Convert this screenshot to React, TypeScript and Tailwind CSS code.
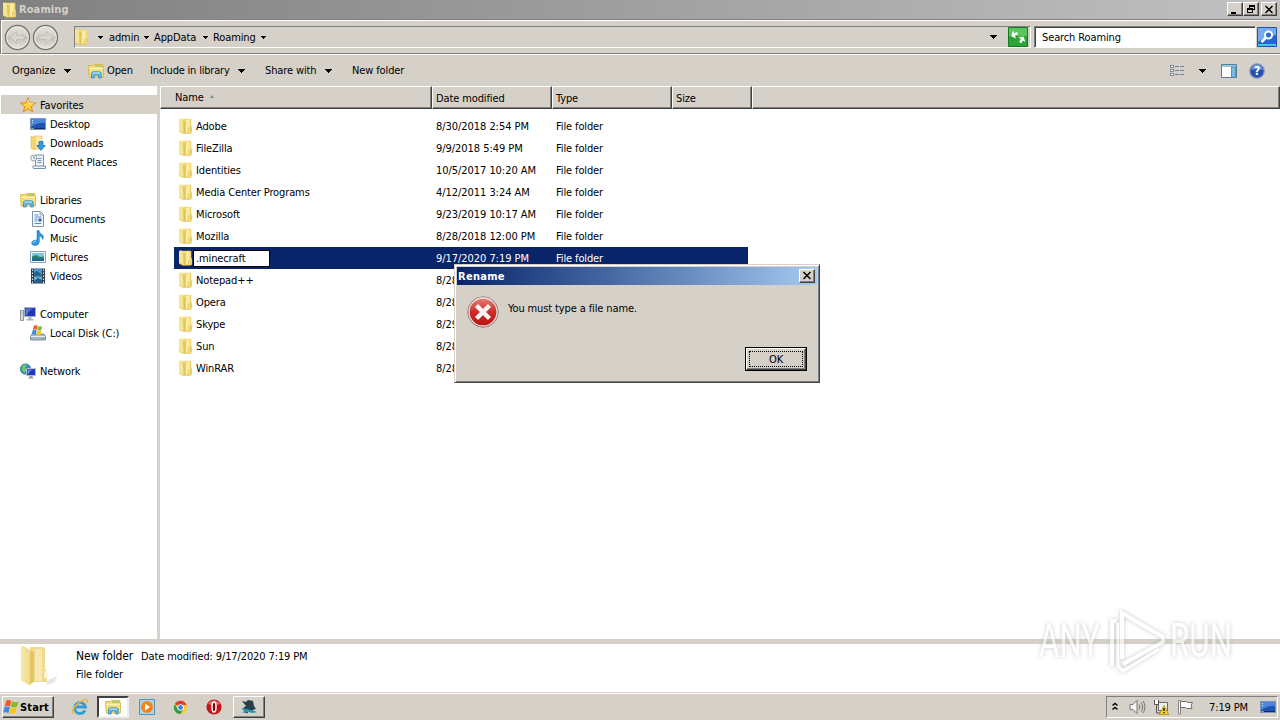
import React from 'react'
import clsx from 'clsx'

const raised =
  'bg-[#d5d0c8] border border-t-white border-l-white border-r-[#404040] border-b-[#404040] shadow-[inset_-1px_-1px_0_#808080]'

interface IconProps {
  className?: string
}

interface LabelProps {
  className?: string
  children: React.ReactNode
}

const Label: React.FC<LabelProps> = ({ className, children }) => (
  <span className={clsx('pt-[2px]', className)}>{children}</span>
)

const FolderIcon: React.FC<IconProps> = ({ className = 'w-4 h-4' }) => (
  <svg viewBox="0 0 16 16" className={clsx('shrink-0', className)}>
    <path d="M5 .8h7.500q.8 0 .8.800v6.400l.8.800v5.400q0 .8-.8.800H5z" fill="#efd769" />
    <path d="M8.300 1.500h3.200v12.800H8z" fill="#faedb0" />
    <path d="M1 1 3 .3l4.500 2v12.500L5.800 15.700 1 13.600z" fill="#f6e48f" />
    <path d="M4.800 2.500 7.500 3v11.600l-1.800 1z" fill="#e3c555" />
    <path d="M10.500 9.500v4.800M12.800 9.500v4" stroke="#dcc05a" strokeWidth=".8" />
    <path d="M1.500 13.800 5.800 15.500h7" stroke="#d4b54a" strokeWidth=".6" fill="none" />
  </svg>
)

const LibraryIcon: React.FC<IconProps> = ({ className = 'w-4 h-4' }) => (
  <svg viewBox="0 0 16 16" className={clsx('shrink-0', className)}>
    <path d="M.5 2.500h5l1-1h8.200v2.300h.8V14H1.200z" fill="#f6df79" stroke="#d4b03e" strokeWidth=".8" />
    <path d="M7 3h7" stroke="#75bd62" />
    <path d="M1 5.500h14" stroke="#fff6c2" />
    <path d="M3.500 15v-4.200q0-2 2-2h5.700q2 0 2 2V15h-2.600v-3H6.200v3z" fill="#67bce9" stroke="#2c83c0" strokeWidth=".8" />
    <path d="M4.500 10h7.500" stroke="#c8ecfc" />
  </svg>
)

const StarIcon = () => (
  <svg viewBox="0 0 16 16" className="w-4 h-4 shrink-0">
    <path d="m8 .7 2 5.100 5.500.3-4.300 3.500 1.500 5.300L8 11.900l-4.700 3 1.500-5.300L.5 6.100 6 5.800z" fill="#ffd13b" stroke="#e2831b" />
    <path d="m8 2.500 1.400 4 4 .3" stroke="#fff0a2" fill="none" />
  </svg>
)

const DesktopIcon = () => (
  <svg viewBox="0 0 16 16" className="w-4 h-4 shrink-0">
    <path d="M.5 2.500h15v11H.5z" fill="#2153b4" stroke="#7894bd" />
    <path d="M1 3h14v4Q8 6 1 11z" fill="#4b88dc" />
    <path d="M2 4.500h1M2 6.500h1" stroke="#d7e7ff" />
    <path d="M1 12.500h14" stroke="#142d69" />
    <path d="M1 12.500h3" stroke="#5dbd78" />
  </svg>
)

const DownloadsIcon = () => (
  <svg viewBox="0 0 16 16" className="w-4 h-4 shrink-0">
    <path d="M4 1h8v13H4z" fill="#f9e9a4" stroke="#d7b64f" strokeWidth=".6" />
    <path d="m1 1.200 4 1.400V15l-4-1.600z" fill="#f3d870" stroke="#d3b246" strokeWidth=".5" />
    <path d="M9 6.500h4v4h2.300L11 15.400 6.700 10.500H9z" fill="#329be5" stroke="#1a64ac" strokeWidth=".7" />
  </svg>
)

const RecentIcon = () => (
  <svg viewBox="0 0 16 16" className="w-4 h-4 shrink-0">
    <path d="M5.500 1h8v11h2v2.500h-12q-1 0-.5-2.500h2.500z" fill="#edf3f8" stroke="#7892a7" />
    <path d="M7.500 4.500h4M7.500 6.500h4M7.500 8.500h4M6 12h8" stroke="#7195b4" />
    <circle cx="3.700" cy="4" r="3" fill="#f5f8fa" stroke="#8fa0ad" />
    <path d="M3.700 2v2.200h1.600" stroke="#576b7b" fill="none" strokeWidth=".7" />
  </svg>
)

const DocumentIcon = () => (
  <svg viewBox="0 0 16 16" className="w-4 h-4 shrink-0">
    <path d="M2.500.5h8l3 3v12h-11z" fill="#f8fbfe" stroke="#7d95ac" />
    <path d="M10 1v3h3" fill="#c9dceb" stroke="#7d95ac" strokeWidth=".7" />
    <path d="M4.500 4h4M4.500 6h7M4.500 8h3M4.500 10h3M4.500 12.500h7" stroke="#5a8ebf" />
    <path d="M8.500 7.500h3v3h-3z" fill="#315ca6" />
  </svg>
)

const MusicIcon = () => (
  <svg viewBox="0 0 16 16" className="w-4 h-4 shrink-0">
    <path d="M7 .5h2q.4 2.800 3 4.100 2.600 1.800.7 5Q12.500 6.700 9.300 6v6q-.4 3.300-4 3.500-3.700 0-3.700-2.400Q2 10 7 10z" fill="#2a9be2" stroke="#1767ac" strokeWidth=".5" />
    <path d="M3.300 12.800q.5-1.400 2.500-1.600" stroke="#aee1fc" fill="none" />
  </svg>
)

const PictureIcon = () => (
  <svg viewBox="0 0 16 16" className="w-4 h-4 shrink-0">
    <path d="M.5 2.500h15v11H.5z" fill="#f9fcff" stroke="#87a2b8" />
    <path d="M2 4h12v8H2z" fill="#78c7ef" />
    <path d="M2 7.500 6 6l4 2 4-.5V12H2z" fill="#29826b" />
    <path d="m2 9.500 6 .5 6-.8V12H2z" fill="#1f639c" />
  </svg>
)

const VideoIcon = () => (
  <svg viewBox="0 0 16 16" className="w-4 h-4 shrink-0">
    <path d="M1 .5h14v15H1z" fill="#33404c" />
    <path d="M4 1h8v6.500H4z" fill="#3f9bd1" />
    <path d="M4 8.500h8V15H4z" fill="#62b4dc" />
    <path d="m4 5 3-2 5 4H4zm0 8 4-3 4 2v3H4z" fill="#245d8d" />
    <path d="M2.500 1.500v14M13.500 1.500v14" stroke="#e6edf3" strokeDasharray="1.500 1.500" />
  </svg>
)

const ComputerIcon = () => (
  <svg viewBox="0 0 16 16" className="w-4 h-4 shrink-0">
    <path d="M.5 4.500h3v10h-3z" fill="#d7dcd9" stroke="#8b9693" />
    <path d="M1.500 7h1" stroke="#65b84d" />
    <path d="M4.500 1.500h11v9h-11z" fill="#1e37b3" stroke="#a5b0c2" />
    <path d="M5.500 2.500H14Q8 4 7 9.500H5.500z" fill="#5877dd" />
    <path d="M8.500 11h3v2h2v1.500h-7V13h2z" fill="#a9b3c1" />
  </svg>
)

const WindowsFlag: React.FC<IconProps> = ({ className }) => (
  <svg viewBox="0 0 16 16" className={clsx('shrink-0', className)}>
    <path d="M3.300 1.600Q6 .2 8.200 1.900L7 7.500Q4.600 6.200 1.800 7.200z" fill="#ee5c23" />
    <path d="M9 2.300q2.800 1.600 6.500.1l-1.400 5.300q-3.200 1.300-6.300-.1z" fill="#82ba34" />
    <path d="M1.600 8q2.800-1.100 5.200.3l-1.300 5.700q-2.500-1.500-5.300-.4z" fill="#3b8cdb" />
    <path d="M7.600 8.500q3 1.500 6.200.1l-1.400 5.500q-3.200 1.200-6.100-.2z" fill="#fbc51c" />
  </svg>
)

const DiskIcon = () => (
  <svg viewBox="0 0 16 16" className="w-4 h-4 shrink-0">
    <path d="M2 9h12l1.500 2.500v3.500H.5v-3.500z" fill="#a9b9c4" stroke="#667e8e" strokeWidth=".8" />
    <path d="M1 11.500h14" stroke="#e3edf2" />
    <path d="M11.500 13.400h2.500" stroke="#51bd57" />
    <path d="M3.800.8q2-1 3.800 0l-1 4Q5.200 3.800 2.800 4.800z" fill="#ee5c23" />
    <path d="M8.100 1.200q2 .8 4.200-.2l-1 4.200q-2 .6-4.200-.3z" fill="#82ba34" />
    <path d="M2.700 5.200q2.200-1 4 0L5.700 9.500Q4 8.400 1.700 9.400z" fill="#3b8cdb" />
    <path d="M7.200 5.600q2 .8 4.100.2l-1 4.100q-2 .4-4.100-.4z" fill="#fbc51c" />
  </svg>
)

const NetworkIcon = () => (
  <svg viewBox="0 0 16 16" className="w-4 h-4 shrink-0">
    <circle cx="5.500" cy="6" r="5.200" fill="#2c8fc5" stroke="#25658f" strokeWidth=".6" />
    <path d="M2 3q3-3 5-1L5 5l2 2-3 3-2-3z" fill="#6dc86a" />
    <path d="M6.500 5.500h9v7h-9z" fill="#2039bc" stroke="#b2bfd1" />
    <path d="M7.500 6.500H14Q9 7.500 8.500 11.500h-1z" fill="#6b89e6" />
    <path d="M9.500 13h3v1.500h1v1H8.300v-1h1.200z" fill="#8e9db0" />
  </svg>
)

const Caret: React.FC<IconProps> = ({ className }) => (
  <svg viewBox="0 0 7 4" className={clsx('shrink-0', className)} shapeRendering="crispEdges">
    <path d="M0 0h7L3.500 4z" fill="#000" />
  </svg>
)

const NavArrow: React.FC<{ flip?: boolean }> = ({ flip }) => (
  <svg viewBox="0 0 27 27" className={clsx('w-[27px] h-[27px]', flip && '-scale-x-100')}>
    <defs>
      <linearGradient id="nav" x2="0" y2="1">
        <stop stopColor="#e6e4df" />
        <stop offset=".48" stopColor="#d0cdc7" />
        <stop offset=".5" stopColor="#c2bfba" />
        <stop offset="1" stopColor="#e9e7e3" />
      </linearGradient>
    </defs>
    <circle cx="13.500" cy="13.500" r="12" fill="url(#nav)" stroke="#77756f" strokeWidth="1.400" />
    <circle cx="13.500" cy="13.500" r="10.800" fill="none" stroke="#efeeeb" />
    <path d="M6.500 13.500 12.500 7.500v4H20v4h-7.500v4z" fill="#d9d6d0" stroke="#bbb8b2" strokeWidth=".7" />
  </svg>
)

const TitleButton: React.FC<LabelProps> = ({ className, children }) => (
  <button className={clsx(raised, 'h-[14px] w-4 flex items-center justify-center', className)}>
    <svg viewBox="0 0 10 9" className="w-[10px] h-[9px]" fill="none" stroke="#000" shapeRendering="crispEdges">
      {children}
    </svg>
  </button>
)

const CloseGlyph = () => <path d="m1.500 1 7 7m0-7-7 7" strokeWidth="1.500" shapeRendering="auto" />

const sidebar = [
  { title: 'Favorites', icon: <StarIcon />, active: true },
  { title: 'Desktop', icon: <DesktopIcon />, child: true },
  { title: 'Downloads', icon: <DownloadsIcon />, child: true },
  { title: 'Recent Places', icon: <RecentIcon />, child: true },
  null,
  { title: 'Libraries', icon: <LibraryIcon /> },
  { title: 'Documents', icon: <DocumentIcon />, child: true },
  { title: 'Music', icon: <MusicIcon />, child: true },
  { title: 'Pictures', icon: <PictureIcon />, child: true },
  { title: 'Videos', icon: <VideoIcon />, child: true },
  null,
  { title: 'Computer', icon: <ComputerIcon /> },
  { title: 'Local Disk (C:)', icon: <DiskIcon />, child: true },
  null,
  { title: 'Network', icon: <NetworkIcon /> },
]

const files = [
  { name: 'Adobe', date: '8/30/2018 2:54 PM' },
  { name: 'FileZilla', date: '9/9/2018 5:49 PM' },
  { name: 'Identities', date: '10/5/2017 10:20 AM' },
  { name: 'Media Center Programs', date: '4/12/2011 3:24 AM' },
  { name: 'Microsoft', date: '9/23/2019 10:17 AM' },
  { name: 'Mozilla', date: '8/28/2018 12:00 PM' },
  { name: '.minecraft', date: '9/17/2020 7:19 PM', renaming: true },
  { name: 'Notepad++', date: '8/28/2018' },
  { name: 'Opera', date: '8/28/2018' },
  { name: 'Skype', date: '8/29/2018' },
  { name: 'Sun', date: '8/28/2018' },
  { name: 'WinRAR', date: '8/28/2018' },
]

const TitleBar = () => (
  <div className="h-[19px] shrink-0 flex items-center pl-[2px] pr-[3px] bg-linear-to-r from-[#808080] to-[#c1c1c1]">
    <FolderIcon />
    <Label className="-mt-px ml-px font-bold tracking-[0.1px] text-[#d5d0c8]">Roaming</Label>
    <div className="ml-auto -mt-px flex">
      <TitleButton>
        <path d="M1 7.500h5" strokeWidth="2" />
      </TitleButton>
      <TitleButton>
        <path d="M3.500 3V.5h5v4H7M3 1h6M1.500 3.500h5v4h-5zM1 4h6" />
      </TitleButton>
      <TitleButton className="ml-[2px]">
        <CloseGlyph />
      </TitleButton>
    </div>
  </div>
)

const AddressBar = () => (
  <div className="h-[35px] shrink-0 flex items-center pl-[3px] pr-[2px] border-t border-l border-[#808080] shadow-[inset_1px_1px_0_#fff,inset_0_-1px_0_#808080]">
    <div className="flex w-[55px] gap-px">
      <NavArrow />
      <NavArrow flip />
    </div>
    <div className="ml-[15px] w-[957px] h-[22px] flex items-center border border-t-[#808080] border-l-[#808080] border-b-white border-r-white">
      <FolderIcon className="w-4 h-4 -ml-px" />
      <Caret className="ml-2 w-[5px] h-[3px]" />
      <Label className="ml-[6px] w-[35px]">admin</Label>
      <Caret className="w-[5px] h-[3px]" />
      <Label className="ml-[5px] w-[49px]">AppData</Label>
      <Caret className="w-[5px] h-[3px]" />
      <Label className="ml-[5px] w-[48px]">Roaming</Label>
      <Caret className="w-[5px] h-[3px]" />
      <Caret className="ml-auto mr-[11px] w-[7px] h-1" />
      <svg viewBox="0 0 20 20" className="w-5 h-5 mr-[2px]">
        <path d="M.5.5h19v19H.5z" fill="#2ba338" stroke="#187722" />
        <path d="M1 1h18v8H1z" fill="#5cc45d" />
        <path d="m3 8 4-4.500v3h3v2.500H6.500V12z" fill="#fff" transform="rotate(-25 6 8)" />
        <path d="m17 12-4 4.500v-3h-3V11h3.500V8z" fill="#fff" transform="rotate(-60 14 12)" />
      </svg>
    </div>
    <div className="ml-[3px] w-[222px] h-[22px] flex items-center pl-[7px] bg-white border border-t-[#808080] border-l-[#808080] border-b-white border-r-white shadow-[inset_1px_1px_0_#404040]">
      <Label>Search Roaming</Label>
    </div>
    <svg viewBox="0 0 20 20" className="w-5 h-5 ml-px">
      <path d="M.5.5h19v19H.5z" fill="#2865d5" stroke="#2454a5" />
      <path d="M1 1h18v7Q9 9 1 15z" fill="#78a8ee" />
      <path d="M1 17h18v2H1z" fill="#43c4ed" />
      <circle cx="11.500" cy="8" r="3.500" fill="#2d6bcf" stroke="#fff" strokeWidth="2" />
      <path d="m8.500 11-4 4" stroke="#fff" strokeWidth="2.500" />
    </svg>
  </div>
)

const Toolbar = () => (
  <div className="h-[32px] shrink-0 flex items-center pl-3 border-t border-white">
    <Label className="-mt-px w-[52px]">Organize</Label>
    <Caret className="w-[7px] h-1" />
    <LibraryIcon className="ml-[17px] w-4 h-4" />
    <Label className="-mt-px ml-[3px] w-[43px]">Open</Label>
    <Label className="-mt-px w-[88px] tracking-[-0.2px]">Include in library</Label>
    <Caret className="w-[7px] h-1" />
    <Label className="-mt-px ml-5 w-[60px]">Share with</Label>
    <Caret className="w-[7px] h-1" />
    <Label className="-mt-px ml-5">New folder</Label>
    <div className="ml-auto mr-[15px] flex items-center">
      <svg viewBox="0 0 16 14" className="w-4 h-[14px]" fill="none" shapeRendering="crispEdges">
        <path d="M1.500 1.500h3v2h-3zM1.500 5.500h3v2h-3zM1.500 9.500h3v2h-3z" fill="#fff" stroke="#7e8b9b" />
        <path d="M6 2.500h4m1 0h4M6 6.500h4m1 0h4M6 10.500h4m1 0h4" stroke="#76808c" />
      </svg>
      <Caret className="ml-[14px] w-[7px] h-1" />
      <svg viewBox="0 0 16 14" className="ml-[15px] w-4 h-[14px]">
        <path d="M.5.500h15v13H.5z" fill="#fff" stroke="#547c9d" />
        <path d="M1 1h14v2H1z" fill="#9dc5db" />
        <path d="M10.500 3h4v10h-4z" fill="#77bddf" stroke="#4d95bd" />
      </svg>
      <svg viewBox="0 0 16 16" className="ml-3 w-4 h-4">
        <circle cx="8" cy="8" r="7.200" fill="#2450b5" stroke="#8995b0" strokeWidth="1.300" />
        <path d="M2.500 7a5.500 5.500 0 0 1 11 0Q8 5 2.500 7" fill="#7496dc" />
        <text x="8" y="12.300" textAnchor="middle" fontSize="12" fontWeight="bold" fill="#fff">?</text>
      </svg>
    </div>
  </div>
)

const Sidebar = () => (
  <nav className="w-[160px] shrink-0 bg-white border-r-[3px] border-[#d5d0c8] pt-[9px]">
    {sidebar.map((item, i) =>
      item ? (
        <div
          key={i}
          className={clsx(
            'h-[19px] flex items-center',
            item.child ? 'pl-[30px]' : 'pl-5',
            item.active && 'ml-px -mr-[3px] pl-[19px] bg-[#d5d0c8]'
          )}
        >
          {item.icon}
          <Label className="ml-1">{item.title}</Label>
        </div>
      ) : (
        <div key={i} className="h-[19px]" />
      )
    )}
  </nav>
)

const FileList = () => (
  <main className="flex-1 bg-white">
    <div className="h-[23px] flex leading-[24px]">
      <div className={clsx(raised, 'w-[272px] pl-[14px] flex items-center')}>
        Name
        <svg viewBox="0 0 6 4" className="ml-[5px] mb-[3px] w-[6px] h-[3px]">
          <path d="M0 4 3 0l3 4z" fill="#8d8a84" />
        </svg>
      </div>
      <div className={clsx(raised, 'w-[120px] pl-[3px]')}>Date modified</div>
      <div className={clsx(raised, 'w-[120px] pl-[3px]')}>Type</div>
      <div className={clsx(raised, 'w-[80px] pl-[3px]')}>Size</div>
      <div className={clsx(raised, 'flex-1')} />
    </div>
    <div className="ml-[14px] mt-[6px] w-[574px]">
      {files.map((file) => (
        <div key={file.name} className={clsx('h-[22px] flex items-center pl-[3px]', file.renaming && 'bg-[#0a246a] text-white')}>
          <FolderIcon className="w-4 h-4 ml-px -mt-px" />
          {file.renaming ? (
            <div className="-ml-px w-[77px] h-[17px] flex items-center pl-[2px] border border-black bg-white text-black mr-[166px]">
              <Label className="-mt-px">{file.name}</Label>
            </div>
          ) : (
            <Label className="ml-[2px] w-[240px]">{file.name}</Label>
          )}
          <Label className="w-[120px] tracking-[-0.05px]">{file.date}</Label>
          <Label>File folder</Label>
        </div>
      ))}
    </div>
  </main>
)

const DetailsPane = () => (
  <div className="h-[53px] shrink-0 flex bg-white border-t-[5px] border-[#d5d0c8]">
    <svg viewBox="0 0 40 44" className="ml-[18px] w-10 h-[44px]">
      <defs>
        <linearGradient id="bigFolder">
          <stop stopColor="#f9eaa6" />
          <stop offset="1" stopColor="#edd789" />
        </linearGradient>
      </defs>
      <path d="M28 37 39 32l-2 6-8 3z" fill="#bbb" opacity=".35" />
      <path d="M12 3h13q2 0 2 2v20l2 2v10q0 1-1 1H12z" fill="#efdb8f" />
      <path d="M17 5h7v32h-7z" fill="#f7e8af" />
      <path d="M3 3q0-2 2-1l7 4q1 .5 1 2v32q0 2-2 1L4 37q-1-.5-1-2z" fill="url(#bigFolder)" />
      <path d="M12 6v34l4-2V8z" fill="#e3c468" />
      <path d="M27.500 27v7" stroke="#fff" strokeWidth="2" />
    </svg>
    <div className="ml-[18px] pt-[4px]">
      <div className="h-[18px] flex items-baseline">
        <span className="w-[65px] pt-px text-[12px]">New folder</span>
        <span>Date modified: 9/17/2020 7:19 PM</span>
      </div>
      <div className="h-[18px] leading-[18px]">File folder</div>
    </div>
  </div>
)

const Taskbar = () => (
  <footer className="h-7 shrink-0 flex items-center bg-[#d5d0c8] border-t border-[#d5d0c8] shadow-[inset_0_1px_0_#fff] pt-px pl-[2px] pr-[2px]">
    <button className={clsx(raised, 'w-[52px] h-[22px] flex items-center font-bold')}>
      <WindowsFlag className="w-4 h-4" />
      <Label className="ml-px tracking-[0.15px]">Start</Label>
    </button>
    <svg viewBox="0 0 18 18" className="ml-[17px] w-[18px] h-[18px]" fill="none">
      <path d="M14 12.500A5.500 5.500 0 1 1 14.500 9H5" stroke="#329ce0" strokeWidth="2.800" />
      <path d="M2 15.500C-1 11 12-.5 16 2q1 .8-.3 3" stroke="#e8b73b" strokeWidth="1.500" />
    </svg>
    <div className="ml-2 w-8 h-[22px] flex items-center justify-center bg-white border-2 border-t-[#404040] border-l-[#404040] border-r-[#eee] border-b-[#eee]">
      <LibraryIcon />
    </div>
    <svg viewBox="0 0 16 16" className="ml-[10px] w-4 h-4">
      <path d="M.5.500h15v15H.5z" fill="#a8d4ef" stroke="#5591be" />
      <circle cx="8" cy="8" r="6" fill="#f28518" />
      <path d="m6 4.500 5 3.500-5 3.500z" fill="#fff" />
    </svg>
    <svg viewBox="0 0 16 16" className="ml-[18px] w-[15px] h-[15px]">
      <circle cx="8" cy="8" r="7" fill="#f7cb2d" />
      <path d="M8 8 2 4.300A7 7 0 0 1 14.500 5.200H8z" fill="#df3e31" />
      <path d="M1.900 4.500A7 7 0 0 0 8 15l3-5.500H5z" fill="#2c9e4a" />
      <circle cx="8" cy="8" r="3.400" fill="#fff" />
      <circle cx="8" cy="8" r="2.600" fill="#4285dc" />
    </svg>
    <svg viewBox="0 0 16 16" className="ml-[18px] w-4 h-4">
      <circle cx="8" cy="8" r="7.600" fill="#c5161c" />
      <path d="M2 5a7 7 0 0 1 12 0Q8 7 2 5" fill="#e76766" />
      <ellipse cx="8" cy="8" rx="2" ry="5" fill="#7c080d" stroke="#fff" strokeWidth="1.500" />
    </svg>
    <div className={clsx(raised, 'ml-[11px] w-8 h-[22px] flex items-center justify-center')}>
      <svg viewBox="0 0 18 16" className="w-[18px] h-4">
        <path d="m2 2 4 1 2-2 5 1 1 5 2 3-4 1H6L3 9l3-2z" fill="#283e49" />
        <path d="m1 9 5 1 6 1 5 2-4 1-5-1-6 1 2-2z" fill="#2a98ad" />
        <path d="m9 10 4 1m-8 2 3 1" stroke="#173f52" />
      </svg>
    </div>
    <div className="ml-auto w-[172px] h-[22px] flex items-center pl-[5px] border border-t-[#808080] border-l-[#808080] border-b-white border-r-white">
      <svg viewBox="0 0 6 9" className="mb-[2px] w-[6px] h-[9px]" fill="none" stroke="#000" strokeWidth="1.400">
        <path d="m.5 3.500 2.500-2 2.500 2m-5 4 2.500-2 2.500 2" />
      </svg>
      <svg viewBox="0 0 17 16" className="ml-[11px] w-[17px] h-4" fill="none" stroke="#777">
        <path d="M1 5.500h3L8 1.500v13l-4-4H1z" fill="#f6f6f5" />
        <path d="M10 5.500q2 2.500 0 5M12 3.500q3.500 4.500 0 9M14 2q4 6 0 12" />
      </svg>
      <svg viewBox="0 0 16 16" className="ml-[7px] w-4 h-4">
        <path d="M5.500 3.500h9v8h-9z" fill="#edf0ed" stroke="#666" />
        <path d="M1.500 1v4.500h4V1M3.500 5v9h5" fill="none" stroke="#555" />
        <path d="M2 1h3v4H2z" fill="#fff" />
        <path d="m11 6.500 4.700 9H6.300z" fill="#f8d51b" stroke="#a78000" strokeWidth=".7" />
        <path d="M11 9v3m0 1v1.300" stroke="#000" strokeWidth="1.300" />
      </svg>
      <svg viewBox="0 0 16 16" className="ml-2 w-4 h-4">
        <path d="M1.500 1.500h2V15h-2z" fill="#fff" stroke="#6c6c6c" strokeWidth=".8" />
        <path d="M3.500 2.500h6l1.500 1h4.500L14 6.500l1 3H9.500l-1-1h-5z" fill="#fff" stroke="#6c6c6c" />
      </svg>
      <Label className="ml-4 w-[51px]">7:19 PM</Label>
      <DesktopIcon />
    </div>
  </footer>
)

const RenameDialog = () => (
  <div
    role="dialog"
    className="absolute left-[454px] top-[264px] w-[366px] h-[119px] p-[2px] bg-[#d5d0c8] border border-t-[#d5d0c8] border-l-[#d5d0c8] border-r-[#404040] border-b-[#404040] shadow-[inset_1px_1px_0_#fff,inset_-1px_-1px_0_#808080]"
  >
    <div className="h-[18px] flex items-center pl-px pr-[2px] bg-linear-to-r from-[#0a246a] to-[#a6caf0] text-white font-bold">
      <Label className="tracking-[0.3px]">Rename</Label>
      <TitleButton className="ml-auto -mt-px">
        <CloseGlyph />
      </TitleButton>
    </div>
    <div className="h-[62px] flex pl-[10px] pt-[11px]">
      <svg viewBox="0 0 32 32" className="w-8 h-8">
        <defs>
          <linearGradient id="error" x2="0" y2="1">
            <stop stopColor="#e68a83" />
            <stop offset=".5" stopColor="#cc2d28" />
            <stop offset="1" stopColor="#b51113" />
          </linearGradient>
        </defs>
        <circle cx="16" cy="16" r="15.200" fill="url(#error)" stroke="#8e8582" />
        <circle cx="16" cy="16" r="14" fill="none" stroke="#eee1df" strokeWidth="1.300" />
        <path d="m9.500 9.500 13 13m0-13-13 13" stroke="#f7f3f2" strokeWidth="4.500" />
      </svg>
      <span className="ml-[9px] mt-[6px]">You must type a file name.</span>
    </div>
    <button className="ml-[288px] w-[62px] h-[24px] p-px bg-black">
      <span className={clsx(raised, 'block h-full p-[2px]')}>
        <span className="flex h-full items-center justify-center border border-dotted border-black">
          <Label>OK</Label>
        </span>
      </span>
    </button>
  </div>
)

const Watermark = () => (
  <svg
    viewBox="0 0 220 72"
    className="absolute left-[1034px] top-[605px] w-[220px] h-[72px] opacity-65 drop-shadow-[0_0_2px_#aaa] pointer-events-none"
  >
    <g fill="#fff" fontFamily="Roboto, sans-serif" fontSize="48" letterSpacing="0">
      <text x="5" y="52" textLength="61" lengthAdjust="spacingAndGlyphs">ANY</text>
      <text x="136" y="52" textLength="62" lengthAdjust="spacingAndGlyphs">RUN</text>
    </g>
    <path d="M82 16h-4v45M88 54V8l41 24v5L89 59" fill="none" stroke="#fff" strokeWidth="4" />
    <path d="M84 18v43l5 5 36-22" fill="none" stroke="#fff" strokeWidth="3" />
  </svg>
)

export default function App() {
  return (
    <div className="relative w-[1280px] h-[720px] overflow-hidden flex flex-col bg-[#d5d0c8] text-black text-[11px] leading-[14px] tracking-[-0.12px] font-['DejaVu_Sans_Condensed','DejaVu_Sans',sans-serif] whitespace-nowrap">
      <TitleBar />
      <AddressBar />
      <Toolbar />
      <div className="flex-1 min-h-0 flex">
        <Sidebar />
        <FileList />
      </div>
      <DetailsPane />
      <Taskbar />
      <RenameDialog />
      <Watermark />
    </div>
  )
}
